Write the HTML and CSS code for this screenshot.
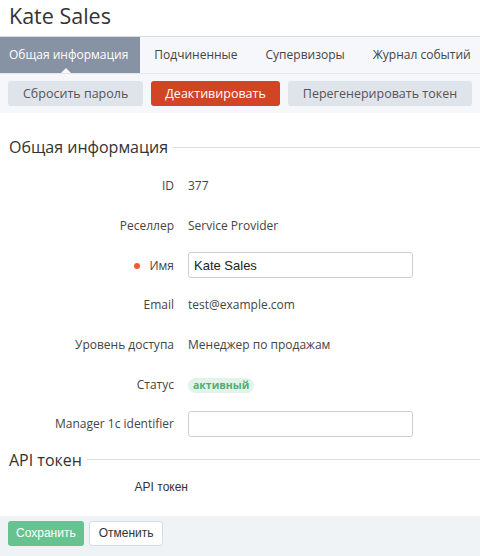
FILE: index.html
```html
<!DOCTYPE html>
<html lang="ru">
<head>
<meta charset="utf-8">
<title>Kate Sales</title>
<link rel="stylesheet" href="styles.css">
</head>
<body>
<div class="page">
  <h1 class="title">Kate Sales</h1>
  <nav class="tabs">
    <span class="tab active">Общая информация</span>
    <span class="tab">Подчиненные</span>
    <span class="tab">Супервизоры</span>
    <span class="tab">Журнал событий</span>
  </nav>
  <div class="toolbar">
    <button class="btn btn-gray">Сбросить пароль</button>
    <button class="btn btn-red">Деактивировать</button>
    <button class="btn btn-gray">Перегенерировать токен</button>
  </div>
  <main class="content">
    <h2 class="section">Общая информация</h2>
    <div class="rows">
      <div class="row"><div class="label">ID</div><div class="value">377</div></div>
      <div class="row"><div class="label">Реселлер</div><div class="value">Service Provider</div></div>
      <div class="row"><div class="label"><span class="req"></span>Имя</div><div class="value"><input class="input" type="text" value="Kate Sales"></div></div>
      <div class="row"><div class="label">Email</div><div class="value">test@example.com</div></div>
      <div class="row"><div class="label">Уровень доступа</div><div class="value">Менеджер по продажам</div></div>
      <div class="row"><div class="label">Статус</div><div class="value"><span class="badge">активный</span></div></div>
      <div class="row"><div class="label">Manager 1c identifier</div><div class="value"><input class="input" type="text" value=""></div></div>
    </div>
    <h2 class="section section-api">API токен</h2>
    <div class="api-row"><div class="api-label">API токен</div></div>
  </main>
  <footer class="footer">
    <button class="btn btn-green">Сохранить</button>
    <button class="btn btn-white">Отменить</button>
  </footer>
</div>
</body>
</html>
```
FILE: styles.css
```css
html, body {
  margin: 0;
  padding: 0;
}
body {
  font-family: "Open Sans", "Liberation Sans", sans-serif;
  font-size: 12px;
  color: #333;
  background: #fff;
}
.page {
  display: flex;
  flex-direction: column;
  min-height: 556px;
}
.title {
  margin: 0;
  height: 36px;
  padding: 0 9px;
  font-size: 21.5px;
  font-weight: 400;
  line-height: 32px;
  color: #333;
}
.tabs {
  display: flex;
  height: 36px;
  border-top: 1px solid #d6dce4;
  border-bottom: 1px solid #e3e7ec;
  background: #f5f7fa;
}
.tab {
  position: relative;
  padding: 0 14px;
  line-height: 36px;
  color: #444;
  white-space: nowrap;
}
.tab:first-child {
  padding: 0 12px 0 9px;
}
.tab.active {
  background: #8792a4;
  color: #fff;
}
.tab.active::after {
  content: "";
  position: absolute;
  left: 61px;
  bottom: 0;
  border-left: 5px solid transparent;
  border-right: 5px solid transparent;
  border-bottom: 5px solid #f5f7fa;
}
.toolbar {
  display: flex;
  gap: 8px;
  padding: 7px 8px;
  background: #f5f7fa;
}
.btn {
  height: 25px;
  padding: 0 15px;
  border: 0;
  border-radius: 3px;
  font-family: "Open Sans", "Liberation Sans", sans-serif;
  font-size: 12.5px;
  line-height: 25px;
  white-space: nowrap;
  cursor: pointer;
}
.btn-gray {
  background: #dfe4eb;
  color: #555;
}
.btn-red {
  background: #d14424;
  color: #fff;
  padding: 0 14px;
}
.btn-green {
  background: #66c28f;
  color: #fff;
  font-family: "Liberation Sans", Arial, sans-serif;
  font-size: 12px;
  padding: 0 8px;
}
.btn-white {
  background: #fff;
  border: 1px solid #d6dce4;
  color: #333;
  font-family: "Liberation Sans", Arial, sans-serif;
  font-size: 12px;
  padding: 0 9px;
  line-height: 23px;
}
.content {
  flex: 1;
  display: flex;
  flex-direction: column;
}
.section {
  display: flex;
  align-items: center;
  margin: 22px 0 0 0;
  padding-left: 9px;
  height: 24px;
  font-size: 16px;
  font-weight: 400;
  color: #333;
  white-space: nowrap;
}
.section::after {
  content: "";
  flex: 1;
  height: 1px;
  margin-left: 5px;
  background: #d9dee5;
}
.section-api {
  margin-top: 4px;
}
.rows {
  margin-top: 7px;
  display: flex;
  flex-direction: column;
}
.row {
  display: flex;
  align-items: center;
  height: 39.67px;
}
.label {
  width: 174px;
  text-align: right;
  color: #444;
  white-space: nowrap;
}
.value {
  margin-left: 14px;
  color: #444;
}
.req {
  display: inline-block;
  width: 6px;
  height: 6px;
  border-radius: 50%;
  background: #f05a30;
  margin-right: 9px;
  vertical-align: 1px;
}
.input {
  box-sizing: border-box;
  width: 225px;
  height: 26px;
  border: 1px solid #c9cfd7;
  border-radius: 3px;
  padding: 0 5px;
  font-family: "Liberation Sans", Arial, sans-serif;
  font-size: 13px;
  color: #222;
  outline: none;
  display: block;
}
.badge {
  display: inline-block;
  padding: 0 5px;
  border-radius: 8px;
  background: #e2f4ea;
  color: #4fae79;
  font-size: 10.5px;
  font-weight: 700;
  line-height: 15px;
}
.api-row {
  display: flex;
  align-items: center;
  height: 24px;
  margin-top: 3px;
}
.api-label {
  width: 188px;
  text-align: right;
  font-family: "Liberation Sans", Arial, sans-serif;
  font-size: 12px;
  color: #333;
}
.footer {
  display: flex;
  gap: 5px;
  height: 40px;
  box-sizing: border-box;
  padding: 5px 8px;
  background: #f0f3f6;
}
```
